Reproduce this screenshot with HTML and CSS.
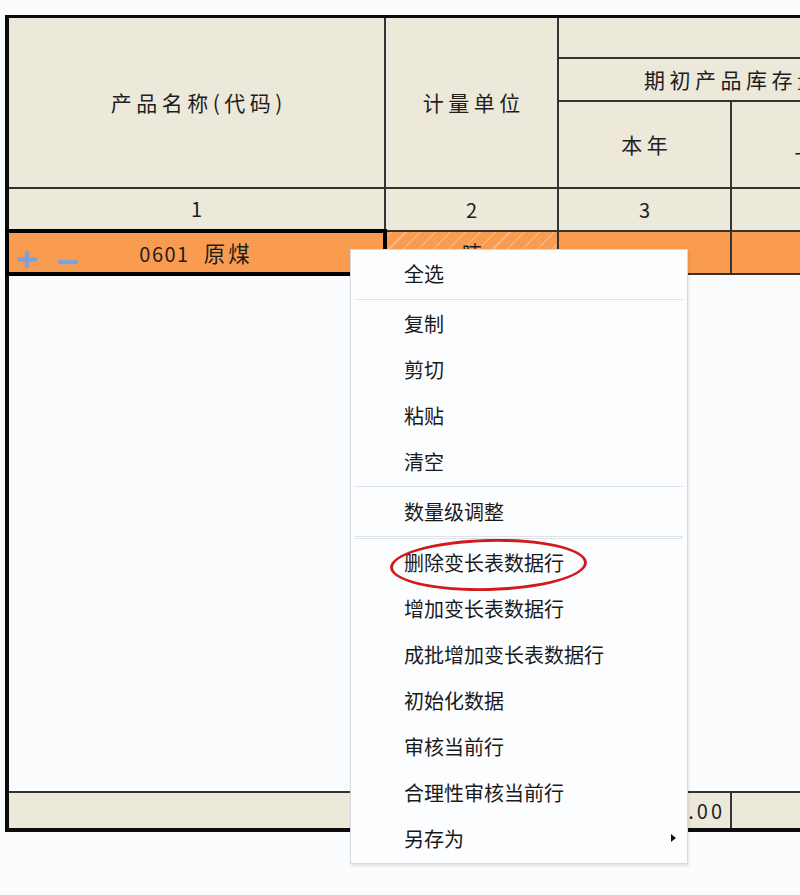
FILE: index.html
```html
<!DOCTYPE html>
<html lang="zh-CN">
<head>
<meta charset="utf-8">
<title>变长表数据</title>
<link rel="stylesheet" href="styles.css">
</head>
<body>
<div class="sheet">
  <table class="grid">
    <colgroup>
      <col class="c1"><col class="c2"><col class="c3"><col class="c4"><col class="c5">
    </colgroup>
    <thead>
      <tr class="r-group">
        <th rowspan="3" class="hd">产品名称(代码)</th>
        <th rowspan="3" class="hd">计量单位</th>
        <th colspan="3"></th>
      </tr>
      <tr class="r-sub">
        <th colspan="2" class="hd">期初产品库存量</th>
        <th class="hd">期末</th>
      </tr>
      <tr class="r-year">
        <th class="hd">本年</th>
        <th class="hd">上年</th>
        <th class="hd">本年</th>
      </tr>
      <tr class="r-num">
        <th class="num-hd">1</th>
        <th class="num-hd">2</th>
        <th class="num-hd">3</th>
        <th class="num-hd">4</th>
        <th class="num-hd">5</th>
      </tr>
    </thead>
    <tbody>
      <tr class="r-data">
        <td class="sel">
          <div class="namecell">
            <span class="tools">
              <svg class="ico" width="20" height="17" viewBox="0 0 20 17"><path d="M2 8.5H18M10 1.5V15.5" stroke="#7ea2d8" stroke-width="4.5" stroke-linecap="round" fill="none"/></svg>
              <svg class="ico minus" width="20" height="17" viewBox="0 0 20 17"><path d="M2 11H18" stroke="#7ea2d8" stroke-width="4.5" stroke-linecap="round" fill="none"/></svg>
            </span>
            <span class="val"><span class="code">0601</span><span class="name">原煤</span></span>
            <span></span>
          </div>
        </td>
        <td class="lock">吨</td>
        <td class="cell"></td>
        <td class="cell"></td>
        <td class="cell"></td>
      </tr>
      <tr class="r-empty"><td colspan="5"></td></tr>
      <tr class="r-foot">
        <td></td>
        <td></td>
        <td class="amt">0.00</td>
        <td></td>
        <td></td>
      </tr>
    </tbody>
  </table>
</div>

<ul class="ctx-menu">
  <li class="item">全选</li>
  <li class="sep"></li>
  <li class="item">复制</li>
  <li class="item">剪切</li>
  <li class="item">粘贴</li>
  <li class="item">清空</li>
  <li class="sep"></li>
  <li class="item">数量级调整</li>
  <li class="sep"></li>
  <li class="sep"></li>
  <li class="item marked">删除变长表数据行</li>
  <li class="item">增加变长表数据行</li>
  <li class="item">成批增加变长表数据行</li>
  <li class="item">初始化数据</li>
  <li class="item">审核当前行</li>
  <li class="item">合理性审核当前行</li>
  <li class="item sub">另存为<span class="arrow"></span></li>
</ul>
</body>
</html>
```
FILE: styles.css
```css
* { box-sizing: border-box; }
html, body { margin: 0; padding: 0; }
body {
  width: 800px;
  height: 895px;
  overflow: hidden;
  position: relative;
  background: #fbfcfe;
  font-family: "Noto Sans CJK SC", "Noto Sans", sans-serif;
  color: #1e1e1e;
}

.sheet {
  width: 800px;
  overflow: hidden;
  padding: 15px 0 0 5px;
}

.grid {
  border-collapse: collapse;
  table-layout: fixed;
  width: 1197px;
  border-style: solid;
  border-color: #0c0c0c;
  border-width: 3px 3px 4px 4px;
}
.c1 { width: 378px; }
.c2 { width: 173px; }
.c3 { width: 173px; }
.c4 { width: 173px; }
.c5 { width: 300px; }

.grid th, .grid td {
  border: 2px solid #333;
  padding: 0;
  font-weight: normal;
  font-size: 20px;
  text-align: center;
  vertical-align: middle;
}
.grid thead th { background: #ece8da; }
.grid th.hd { font-size: 21px; letter-spacing: 4.5px; text-indent: 4.5px; }

.r-group { height: 41px; }
.r-sub { height: 43px; }
.r-year { height: 87px; }
.r-num { height: 43px; }
.r-data { height: 43px; }
.r-empty { height: 518px; }
.r-foot { height: 38px; }

.r-data td { background: #fa9c50; }
.grid td.sel { border: 4px solid #000; }
.grid td.lock {
  background-color: #fa9c50;
  background-image: repeating-linear-gradient(-45deg, rgba(255,255,255,0) 0 9px, rgba(255,255,255,0.25) 9px 10.5px);
}

.namecell {
  display: grid;
  grid-template-columns: 1fr auto 1fr;
  align-items: center;
  height: 100%;
}
.tools {
  display: flex;
  align-self: end;
  gap: 21px;
  padding-left: 8px;
  line-height: 0;
}
.val { display: flex; align-items: baseline; }
.code { letter-spacing: 1.5px; }
.name { font-size: 21.5px; letter-spacing: 3px; margin-left: 14px; }

.r-empty td { background: #fbfcfe; }
.r-foot td { background: #ece8da; }
.grid td.amt { text-align: right; padding-right: 5px; letter-spacing: 3px; }

.ctx-menu {
  position: absolute;
  left: 350px;
  top: 249px;
  width: 338px;
  height: 615px;
  margin: 0;
  padding: 1px 0 2px;
  list-style: none;
  background: #fcfdff;
  border: 1px solid #d6d9df;
  box-shadow: 1px 2px 3px rgba(0,0,0,0.10);
  font-size: 20px;
  color: #1a1a1a;
}
.ctx-menu .item {
  height: 45.85px;
  display: flex;
  align-items: center;
  padding-left: 53px;
  position: relative;
}
.ctx-menu .sep {
  height: 4px;
  margin: 0 4px;
  position: relative;
}
.ctx-menu .sep + .sep { height: 2px; }
.ctx-menu .sep::before {
  content: "";
  position: absolute;
  left: 0;
  right: 0;
  top: 2px;
  border-top: 1px solid #dfe2e7;
}
.ctx-menu .sep + .sep::before { top: 0; }
.ctx-menu .item.marked::before {
  content: "";
  position: absolute;
  left: 39px;
  top: -1px;
  width: 191px;
  height: 46px;
  border: 3px solid #d2191c;
  border-radius: 50%;
  transform: rotate(-1.5deg);
}
.arrow {
  margin-left: auto;
  margin-right: 11px;
  width: 0;
  height: 0;
  border-left: 5px solid #111;
  border-top: 4px solid transparent;
  border-bottom: 4px solid transparent;
}
```
